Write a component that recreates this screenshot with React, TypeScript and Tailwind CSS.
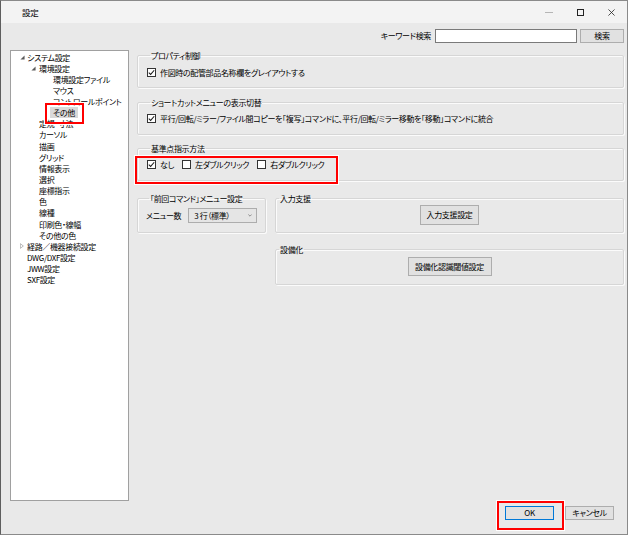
import React from "react";

type Node = { label: string; level: 0 | 1 | 2; arrow?: "open" | "closed"; selected?: boolean };

const treeItems: Node[] = [
  { label: "システム設定", level: 0, arrow: "open" },
  { label: "環境設定", level: 1, arrow: "open" },
  { label: "環境設定ファイル", level: 2 },
  { label: "マウス", level: 2 },
  { label: "コントロールポイント", level: 2 },
  { label: "その他", level: 2, selected: true },
  { label: "定規・寸法", level: 1 },
  { label: "カーソル", level: 1 },
  { label: "描画", level: 1 },
  { label: "グリッド", level: 1 },
  { label: "情報表示", level: 1 },
  { label: "選択", level: 1 },
  { label: "座標指示", level: 1 },
  { label: "色", level: 1 },
  { label: "線種", level: 1 },
  { label: "印刷色・線幅", level: 1 },
  { label: "その他の色", level: 1 },
  { label: "経路／機器接続設定", level: 0, arrow: "closed" },
  { label: "DWG/DXF設定", level: 0 },
  { label: "JWW設定", level: 0 },
  { label: "SXF設定", level: 0 },
];

const Arrow = ({ open }: { open: boolean }) =>
  open ? (
    <svg viewBox="0 0 6 6" className="w-[5px] h-[5px]">
      <path d="M5.5 0.5 L5.5 5.5 L0.5 5.5 Z" fill="#5a5a5a" />
    </svg>
  ) : (
    <svg viewBox="0 0 6 8" className="w-[4px] h-[6px]">
      <path d="M0.5 0.5 L5 4 L0.5 7.5 Z" fill="none" stroke="#8a8a8a" strokeWidth="0.9" />
    </svg>
  );

function Check({ checked }: { checked?: boolean }) {
  return (
    <span className="w-[9px] h-[9px] border border-[#333] bg-white flex items-center justify-center shrink-0">
      {checked && (
        <svg viewBox="0 0 9 9" className="w-[7px] h-[7px]">
          <path d="M1 4.6 L3.4 7 L8 1.6" fill="none" stroke="#1a1a1a" strokeWidth="1.3" />
        </svg>
      )}
    </span>
  );
}

function Group({ title, className, children }: { title: string; className?: string; children: React.ReactNode }) {
  return (
    <fieldset
      className={
        "border border-[#d6d6d6] rounded-[2px] shadow-[inset_1px_1px_0_#fbfbfb,1px_1px_0_#fbfbfb] px-0 " +
        (className ?? "")
      }
    >
      <legend className="ml-[3px] px-[1px] leading-[11px]">{title}</legend>
      {children}
    </fieldset>
  );
}

const btn = "bg-[#e1e1e1] border border-[#adadad] flex items-center justify-center";

export default function App() {
  return (
    <div className="w-[631px] h-[538px] bg-white font-['Noto_Sans_CJK_JP',sans-serif] [font-feature-settings:'palt'] text-[8px] tracking-[-0.35px] text-black">
      <div className="relative w-[628px] h-[535px] border border-[#8a8a8a] border-l-[#5e5e5e] flex flex-col bg-[#e9e9e9]">
        {/* title bar */}
        <div className="h-[22px] bg-[#f3f3f3] flex items-center pl-[21px]">
          <span className="text-[8.5px]">設定</span>
          <div className="ml-auto flex items-center h-full">
            <span className="w-[8px] h-px bg-[#b5b5b5] mr-[24px]" />
            <span className="w-[7px] h-[7px] border border-[#222] mr-[24px]" />
            <svg viewBox="0 0 8 8" className="w-[7px] h-[7px] mr-[12px]">
              <path d="M0.5 0.5 L7.5 7.5 M7.5 0.5 L0.5 7.5" stroke="#222" strokeWidth="0.9" />
            </svg>
          </div>
        </div>

        <div className="flex-1 flex flex-col pl-[9px] pr-[3px]">
          {/* search */}
          <div className="mt-[6px] h-[14px] flex items-center justify-end">
            <span className="mr-[4px]">キーワード検索</span>
            <div className="w-[142px] h-[14px] bg-white border border-[#7a7a7a]" />
            <button className={btn + " w-[44px] h-[14px] ml-[3px]"}>検索</button>
          </div>

          {/* main */}
          <div className="mt-[7px] flex">
            <div className="w-[119px] h-[451px] bg-white border border-[#a0a0a0] pt-[0.5px]">
              {treeItems.map((n) => (
                <div
                  key={n.label}
                  className={
                    "relative h-[11.15px] leading-[11.15px] whitespace-nowrap " +
                    (n.level === 0 ? "pl-[16px]" : n.level === 1 ? "pl-[28px]" : "pl-[42px]")
                  }
                >
                  {n.arrow && (
                    <span
                      className={
                        "absolute top-0 h-full flex items-center " +
                        (n.level === 0 ? "left-[9px]" : "left-[20px]")
                      }
                    >
                      <Arrow open={n.arrow === "open"} />
                    </span>
                  )}
                  <span className={n.selected ? "bg-[#d9d9d9] -ml-[3px] px-[3px] inline-block" : ""}>{n.label}</span>
                </div>
              ))}
            </div>

            <div className="ml-[8px] flex-1 flex flex-col">
              <Group title="プロパティ制御" className="pt-[6px] pb-[9px] pl-[9px]">
                <div className="flex items-center gap-[4px] h-[11px]">
                  <Check checked />
                  <span>作図時の配管部品名称欄をグレイアウトする</span>
                </div>
              </Group>

              <Group title="ショートカットメニューの表示切替" className="mt-[9px] pt-[5px] pb-[10px] pl-[9px]">
                <div className="flex items-center gap-[4px] h-[11px] whitespace-nowrap">
                  <Check checked />
                  <span>平行/回転/ミラー/ファイル間コピーを「複写」コマンドに、平行/回転/ミラー移動を「移動」コマンドに統合</span>
                </div>
              </Group>

              <Group title="基準点指示方法" className="mt-[8px] pt-[5px] pb-[10px] pl-[9px]">
                <div className="flex items-center h-[11px]">
                  <Check checked />
                  <span className="ml-[4px]">なし</span>
                  <span className="ml-[8px]"><Check /></span>
                  <span className="ml-[4px]">左ダブルクリック</span>
                  <span className="ml-[8px]"><Check /></span>
                  <span className="ml-[4px]">右ダブルクリック</span>
                </div>
              </Group>

              <div className="mt-[12px] grid grid-cols-[129px_1fr] gap-x-[9px]">
                <Group title="「前回コマンド」メニュー設定" className="pt-[4px] pb-[9px] pl-[8px]">
                  <div className="flex items-center">
                    <span>メニュー数</span>
                    <div className="ml-[7px] w-[69px] h-[15px] border border-[#adadad] bg-[#e5e5e5] flex items-center pl-[5px] pr-[4px]">
                      <span>3 行（標準）</span>
                      <svg viewBox="0 0 6 4" className="ml-auto w-[4px] h-[3px]">
                        <path d="M0.5 0.5 L3 3 L5.5 0.5" fill="none" stroke="#555" strokeWidth="0.9" />
                      </svg>
                    </div>
                  </div>
                </Group>
                <Group title="入力支援" className="pt-[1px] pb-[7px]">
                  <div className="flex justify-center">
                    <button className={btn + " w-[59px] h-[20px]"}>入力支援設定</button>
                  </div>
                </Group>
                <div className="col-start-2 mt-[11px]">
                  <Group title="設備化" className="pt-[2px] pb-[8px]">
                    <div className="flex justify-center">
                      <button className={btn + " w-[84px] h-[19px]"}>設備化認識閾値設定</button>
                    </div>
                  </Group>
                </div>
              </div>
            </div>
          </div>

          {/* footer */}
          <div className="mt-[5px] flex justify-end pr-[10px]">
            <button className="w-[49px] h-[14px] bg-[#e1e1e1] border border-[#0078d7] flex items-center justify-center">OK</button>
            <button className={btn + " w-[49px] h-[14px] ml-[11px]"}>キャンセル</button>
          </div>
        </div>

        {/* highlight boxes */}
        <div className="absolute left-[44px] top-[102px] w-[39px] h-[21px] border-2 border-[#ff0000] shadow-[0_0_0_1px_#fff]" />
        <div className="absolute left-[134px] top-[155px] w-[203px] h-[28px] border-2 border-[#ff0000] shadow-[0_0_0_1px_#fff]" />
        <div className="absolute left-[496px] top-[500px] w-[67px] h-[29px] border-2 border-[#ff0000] shadow-[0_0_0_1px_#fff]" />
      </div>
    </div>
  );
}
